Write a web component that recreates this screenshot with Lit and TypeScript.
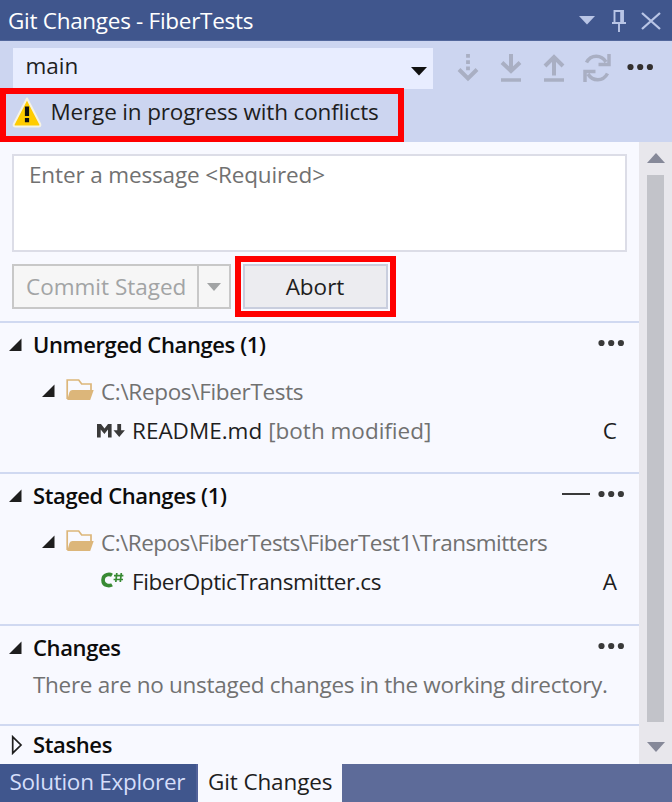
import { LitElement, html, css, svg, nothing } from "lit";
import { customElement, property } from "lit/decorators.js";

const expanded = html`<svg class="tri" width="14" height="14" viewBox="0 0 14 14"><path d="M12.500 .5V13H0z" fill="#1e1e1e"/></svg>`;
const collapsed = html`<svg class="tri" width="14" height="20" viewBox="0 0 14 20"><path d="M3.700 1.800v16.400L12 10z" fill="none" stroke="#1e1e1e" stroke-width="1.7"/></svg>`;
const dots = (c: string) => html`<svg width="27" height="8" viewBox="0 0 27 8" fill=${c}>${[3.5, 13.2, 22.9].map((x) => svg`<circle cx=${x} cy="4" r="3.1"/>`)}</svg>`;
const folder = html`<svg class="folder" width="28" height="24" viewBox="0 0 28 24"><path d="M1.2 21V2h11.5l3 4H25v6" fill="none" stroke="#dcb67a" stroke-width="1.7"/><path d="M6.500 12h21.200L24.200 22H1.2L3.500 14Q4.200 12 6.500 12z" fill="#dcb67a"/></svg>`;
const markdown = html`<svg width="28" height="16" viewBox="0 0 28 16" fill="#3a3a3a"><path d="M0 14.5V1h4l3.5 4.6L11 1h3.6v13.5h-3.6V6.6L7.4 11 3.7 6.6v7.9z"/><path d="M20.3 1h3.8v6.3h3.8L22.2 14l-5.7-6.7h3.8z"/></svg>`;
const csharp = html`<svg width="24" height="16" viewBox="0 0 24 16" fill="none" stroke="#388a34"><path d="M11 3.2C9.300 2.200 2 1.200 2 8s7.300 5.800 9 4.800" stroke-width="3.6"/><path d="M15.800 1l-1 9M20.300 1l-1 9M13 3.700h9.400M12.600 7.500h9.400" stroke-width="1.7"/></svg>`;

@customElement("change-section")
export class ChangeSection extends LitElement {
  @property() heading = "";
  @property() path = "";
  @property() file = "";
  @property() note = "";
  @property() status = "";
  @property() kind = "";
  @property() empty = "";
  @property({ type: Boolean }) minus = false;
  @property({ type: Boolean }) closed = false;

  static styles = css`
    :host { display: block; box-sizing: border-box; border-top: 2px solid #d0d9f1; white-space: nowrap; }
    svg { display: block; flex: none; }
    .row { display: flex; align-items: center; }
    .head { height: 44px; padding: 1px 14px 0 8.500px; box-sizing: border-box; }
    .closed { height: 38px; }
    .tri { margin-right: 10.500px; margin-top: -2px; }
    .closed .tri { margin-top: -1px; }
    h2 { margin: -3px 0 0; font-size: 22px; font-weight: 600; color: #0c0c0c; flex: 1; line-height: 30px; letter-spacing: -0.380px; }
    .actions { display: flex; align-items: center; gap: 8px; margin-top: -5px; }
    .minus { width: 28px; height: 2.500px; background: #3a3a3a; }
    .dir { height: 49px; padding-left: 41.500px; color: #717171; letter-spacing: var(--dir-spacing, -0.330px); }
    .dir .tri { margin-right: 10px; margin-top: -1px; }
    .folder { margin-right: 7.500px; margin-top: -3px; }
    .file { height: 29px; padding: 0 22px 0 97px; color: #1e1e1e; }
    .icon { width: 35px; display: flex; flex: none; }
    .icon.cs { box-sizing: border-box; padding: 0 0 4px 3.500px; }
    .name.cs { letter-spacing: -0.420px; }
    .note { color: #717171; margin-left: 6px; flex: 1; }
    .empty { height: 29px; padding-left: 33px; color: #717171; letter-spacing: -0.290px; }
  `;

  render() {
    return html`
      <div class="row head ${this.closed ? "closed" : ""}">
        ${this.closed ? collapsed : expanded}
        <h2>${this.heading}</h2>
        ${this.closed ? nothing : html`<div class="actions">${this.minus ? html`<span class="minus"></span>` : nothing}${dots("#3a3a3a")}</div>`}
      </div>
      ${this.path ? html`
        <div class="row dir">${expanded}${folder}<span>${this.path}</span></div>
        <div class="row file">
          <span class="icon ${this.kind}">${this.kind === "cs" ? csharp : markdown}</span>
          <span class="name ${this.kind}">${this.file}</span><span class="note">${this.note}</span>
          <span>${this.status}</span>
        </div>` : nothing}
      ${this.empty ? html`<div class="row empty">${this.empty}</div>` : nothing}
    `;
  }
}

@customElement("app-root")
export class AppRoot extends LitElement {
  static styles = css`
    :host { display: flex; flex-direction: column; width: 672px; height: 802px; overflow: hidden; font: 22.500px/30px "Open Sans", "Noto Sans", sans-serif; color: #1e1e1e; white-space: nowrap; background: #f8f9ff; }
    svg { display: block; flex: none; }
    .title { box-sizing: border-box; height: 41px; flex: none; background: #40568d; border-bottom: 1px solid #52679c; color: #fff; display: flex; align-items: center; padding: 1px 11px 0 8px; letter-spacing: -0.290px; }
    .title .grow { flex: 1; }
    .win { display: flex; align-items: center; gap: 17px; }
    .win .pin { margin-right: -1.500px; }
    .tools { height: 101px; flex: none; background: #ccd5f0; display: flex; flex-direction: column; }
    .bar { display: flex; height: 46.500px; box-sizing: border-box; padding: 7px 0 0 13px; }
    .combo { width: 420px; height: 41px; box-sizing: border-box; flex: none; background: #e8edff; padding: 0 6px 5px 12.500px; display: flex; align-items: center; justify-content: space-between; }
    .combo svg { margin-top: 10px; }
    .icons { display: flex; margin: 6px 0 0 24px; gap: 15px; }
    .icons .fetch { margin-right: 3px; }
    .icons .more { margin: 9px 0 0 1px; }
    .merge { box-sizing: border-box; width: 404px; height: 54.500px; border: 6px solid #f00; display: flex; align-items: center; padding: 0 0 5px 6px; gap: 8.500px; background: #ccd5f0; letter-spacing: -0.160px; }
    .main { display: flex; flex: none; height: 622px; }
    .content { width: 639px; flex: none; }
    .commit { height: 179px; box-sizing: border-box; padding: 11.500px 12px 0; }
    .message { box-sizing: border-box; height: 98.500px; border: 2px solid #dcdde7; background: #fff; padding: 4.500px 15px; color: #717171; letter-spacing: -0.140px; }
    .buttons { display: flex; height: 61px; margin-top: 4px; align-items: center; gap: 4px; }
    .split { box-sizing: border-box; width: 219px; height: 45px; border: 2px solid #c8c8c8; background: #f6f6f6; color: #a2a4a5; display: flex; align-items: center; }
    .split .label { flex: 1; padding-left: 12px; }
    .split .drop { width: 30px; height: 100%; border-left: 2px solid #c8c8c8; display: grid; place-items: center; }
    .callout { box-sizing: border-box; width: 161px; height: 61px; border: 6px solid #f00; padding: 2px; }
    .abort { box-sizing: border-box; height: 45px; border: 2px solid #c9cede; background: #ececf0; display: grid; place-items: center; padding-right: 1px; }
    .s1 { height: 151px; }
    .s2 { height: 152px; --dir-spacing: -0.510px; }
    .s3 { height: 100px; }
    .scroll { flex: 1; background: #e8e7ec; display: flex; flex-direction: column; align-items: center; padding: 11px 0; box-sizing: border-box; }
    .thumb { width: 17px; height: 547px; margin: 12px 0 20px; background: #c2c3c9; }
    .tabs { flex: 1; display: flex; background: #5d6b99; }
    .tab { display: flex; align-items: center; box-sizing: border-box; padding-bottom: 2px; }
    .idle { width: 198px; background: #40568d; border-right: 2px solid #52629a; color: #d5defa; padding-left: 9.500px; letter-spacing: -0.280px; }
    .active { width: 144px; background: #f8f9ff; padding-left: 10px; letter-spacing: -0.130px; }
  `;

  render() {
    return html`
      <header class="title">
        <span class="grow">Git Changes - FiberTests</span>
        <div class="win">
          <svg width="16" height="9" viewBox="0 0 16 9"><path d="M0 0h16L8 8.500z" fill="#b9c5e6"/></svg>
          <svg class="pin" width="14" height="24" viewBox="0 0 14 24" fill="none" stroke="#b9c5e6"><path d="M2.500 14V2h8.500v12M0 14h14M7 14v9" stroke-width="1.900"/><path d="M9.500 2v12" stroke-width="2.600"/></svg>
          <svg width="20" height="18" viewBox="0 0 20 18"><path d="M1 1l18 16M19 1L1 17" stroke="#b9c5e6" stroke-width="2.300"/></svg>
        </div>
      </header>
      <section class="tools">
        <div class="bar">
          <div class="combo"><span>main</span><svg width="16" height="9" viewBox="0 0 16 9"><path d="M0 0h16L8 8.500z" fill="#111"/></svg></div>
          <div class="icons">
            <svg class="fetch" width="22" height="28" viewBox="0 0 22 28" fill="none" stroke="#a9afc3"><path d="M11 0v18" stroke-width="3.800" stroke-dasharray="3.800 2.400"/><path d="M2 15.500l9 9 9-9" stroke-width="4"/></svg>
            <svg width="28" height="28" viewBox="0 0 28 28" fill="none" stroke="#a9afc3"><path d="M14 0v15" stroke-width="4"/><path d="M5 8.500l9 8.500 9-8.500" stroke-width="4"/><path d="M4 26h20" stroke-width="3.500"/></svg>
            <svg width="28" height="28" viewBox="0 0 28 28" fill="none" stroke="#a9afc3"><path d="M14 21.500V4" stroke-width="4"/><path d="M5 12l9-9 9 9" stroke-width="4"/><path d="M4 26h20" stroke-width="3.500"/></svg>
            <svg width="28" height="28" viewBox="0 0 28 28" fill="none" stroke="#a9afc3" stroke-width="3.500"><path d="M3.500 8.500C8 0 18.500.500 23 8M26 0v10.500H15.500M24.500 19.500C20 28 9.500 27.500 5 20M2 28V17.500h10.500"/></svg>
            <span class="more">${dots("#33302f")}</span>
          </div>
        </div>
        <div class="merge">
          <svg width="30" height="31" viewBox="0 0 30 31"><path d="M15 1.500L28.200 27q.800 2.500-1.800 2.500H3.600Q1 29.500 1.800 27z" fill="#ffcc00" stroke="#f6f3e3" stroke-width="2" stroke-linejoin="round"/><path d="M15 9.500v9.500M15 21v4.200" stroke="#111" stroke-width="4.200"/></svg>
          <span>Merge in progress with conflicts</span>
        </div>
      </section>
      <div class="main">
        <div class="content">
          <div class="commit">
            <div class="message">Enter a message &lt;Required&gt;</div>
            <div class="buttons">
              <div class="split"><span class="label">Commit Staged</span><span class="drop"><svg width="14" height="8" viewBox="0 0 14 8"><path d="M0 0h14L7 8z" fill="#a2a4a5"/></svg></span></div>
              <div class="callout"><div class="abort">Abort</div></div>
            </div>
          </div>
          <change-section class="s1" heading="Unmerged Changes (1)" path="C:\\Repos\\FiberTests" file="README.md" note="[both modified]" status="C" kind="md"></change-section>
          <change-section class="s2" minus heading="Staged Changes (1)" path="C:\\Repos\\FiberTests\\FiberTest1\\Transmitters" file="FiberOpticTransmitter.cs" status="A" kind="cs"></change-section>
          <change-section class="s3" heading="Changes" empty="There are no unstaged changes in the working directory."></change-section>
          <change-section closed heading="Stashes"></change-section>
        </div>
        <div class="scroll">
          <svg width="18" height="10" viewBox="0 0 18 10"><path d="M0 10h18L9 0z" fill="#868999"/></svg>
          <div class="thumb"></div>
          <svg width="18" height="10" viewBox="0 0 18 10"><path d="M0 0h18L9 10z" fill="#868999"/></svg>
        </div>
      </div>
      <footer class="tabs">
        <div class="tab idle">Solution Explorer</div>
        <div class="tab active">Git Changes</div>
      </footer>
    `;
  }
}
